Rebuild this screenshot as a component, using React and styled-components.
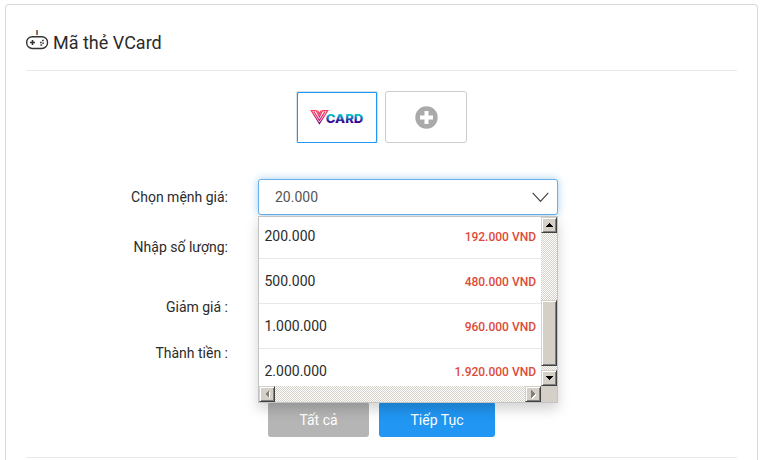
import React from "react";

import styled, { createGlobalStyle, css } from "styled-components";
import { useState } from "react";

const prices = [
  { value: "200.000", price: "192.000 VND" },
  { value: "500.000", price: "480.000 VND" },
  { value: "1.000.000", price: "960.000 VND" },
  { value: "2.000.000", price: "1.920.000 VND" },
];

const App = () => {
  const [selected, setSelected] = useState("20.000");

  return (
    <>
      <GlobalStyle />
      <Panel>
        <Header>
          <GamepadIcon />
          <Title>Mã thẻ VCard</Title>
        </Header>
        <Cards>
          <Card $active>
            <VCardLogo />
          </Card>
          <Card>
            <PlusIcon />
          </Card>
        </Cards>
        <Row>
          <Label>Chọn mệnh giá:</Label>
          <SelectWrapper>
            <Select type="button">
              {selected}
              <Chevron />
            </Select>
            <Dropdown>
              <Options>
                {prices.map((item) => (
                  <Option key={item.value} onClick={() => setSelected(item.value)}>
                    <span>{item.value}</span>
                    <Price>{item.price}</Price>
                  </Option>
                ))}
              </Options>
              <VerticalBar>
                <ScrollButton><Arrow points="4,0 8,4 0,4" /></ScrollButton>
                <Thumb />
                <ScrollButton><Arrow points="0,0 8,0 4,4" /></ScrollButton>
              </VerticalBar>
              <HorizontalBar>
                <ScrollButton><Arrow side disabled points="4,0 4,8 0,4" /></ScrollButton>
                <ScrollButton><Arrow side disabled points="0,0 4,4 0,8" /></ScrollButton>
              </HorizontalBar>
              <Corner />
            </Dropdown>
          </SelectWrapper>
        </Row>
        <Row $top={14}>
          <Label>Nhập số lượng:</Label>
        </Row>
        <Row $top={24}>
          <Label>Giảm giá :</Label>
        </Row>
        <Row $top={10}>
          <Label>Thành tiền :</Label>
        </Row>
        <Actions>
          <Button $width={101}>Tất cả</Button>
          <Button $width={116} $primary>Tiếp Tục</Button>
        </Actions>
      </Panel>
    </>
  );
};

const GamepadIcon = () => (
  <svg width="23" height="20" viewBox="0 0 23 20" fill="none">
    <path d="M11 0v5" stroke="#8a5638" strokeWidth="1.7" />
    <rect x="0.7" y="6.7" width="20.8" height="11.8" rx="5.6" stroke="#333" strokeWidth="1.4" />
    <path d="M4 12.5h5M6.5 10v5" stroke="#333" strokeWidth="1.6" />
    <path d="M14 12.4h1.8M16 10.4h1.8M16.3 13.2h1.6M14.4 15.1h1.8" stroke="#444" strokeWidth="1.5" />
  </svg>
);

const VCardLogo = () => (
  <svg width="54" height="16" viewBox="0 0 54 16">
    <defs>
      <linearGradient id="pink" x1="0" y1="1" x2="0" y2="15" gradientUnits="userSpaceOnUse">
        <stop offset="0" stopColor="#ff3d58" />
        <stop offset="0.5" stopColor="#dc2c72" />
        <stop offset="1" stopColor="#7b1483" />
      </linearGradient>
      <linearGradient id="blue" x1="0" y1="4.5" x2="0" y2="14" gradientUnits="userSpaceOnUse">
        <stop offset="0.1" stopColor="#08c7cf" />
        <stop offset="0.5" stopColor="#1766bd" />
        <stop offset="0.9" stopColor="#35008e" />
      </linearGradient>
    </defs>
    <path
      d="M1.2 1.6h4.9L9.4 8 12.6 1.6h5.2L9.4 14.6zM3.8 2.6l5.6 8.8 5.6-8.8M7.6 1.6l1.8 3.5 1.8-3.5"
      fill="none"
      stroke="url(#pink)"
      strokeWidth="1.15"
    />
    <LogoText x="15.8" y="13.6" textLength="37.4" lengthAdjust="spacingAndGlyphs" fill="url(#blue)">
      CARD
    </LogoText>
  </svg>
);

const PlusIcon = () => (
  <svg width="23" height="23" viewBox="0 0 23 23">
    <circle cx="11.5" cy="11.5" r="11.2" fill="#aaa" />
    <path d="M11.5 5v13M5 11.5h13" stroke="#fff" strokeWidth="4" />
  </svg>
);

const Chevron = () => (
  <svg width="17" height="11" viewBox="0 0 17 11" fill="none">
    <path d="M0.7 0.8 8.5 9.3 16.3 0.8" stroke="#444" strokeWidth="1.2" />
  </svg>
);

const Arrow = ({ points, side, disabled }) => (
  <ArrowSvg
    width={side ? 4 : 8}
    height={side ? 8 : 4}
    viewBox={side ? "0 0 4 8" : "0 0 8 4"}
    shapeRendering="crispEdges"
    $disabled={disabled}
  >
    <polygon points={points} />
  </ArrowSvg>
);

const ArrowSvg = styled.svg`
  fill: ${(props) => (props.$disabled ? "#808080" : "#000")};
  filter: ${(props) => (props.$disabled ? "drop-shadow(1px 1px 0 #fff)" : "none")};
`;

const GlobalStyle = createGlobalStyle`
  * {
    box-sizing: border-box;
  }

  body {
    background: #fff;
    color: #2b2b2b;
    font-family: Roboto, "Liberation Sans", sans-serif;
    font-size: 14px;
    margin: 0;
  }
`;

const Panel = styled.div`
  border: 1px solid #d9d9d9;
  border-bottom: none;
  border-radius: 4px 4px 0 0;
  height: 456px;
  margin: 4px 5px 0;
  padding: 0 20px;
`;

const Header = styled.div`
  align-items: flex-start;
  border-bottom: 1px solid #e8e8e8;
  display: flex;
  gap: 4px;
  height: 66px;
  padding-top: 25px;
`;

const Title = styled.h1`
  font-size: 18px;
  font-weight: 400;
  line-height: 26px;
  margin: 0;
`;

const Cards = styled.div`
  display: flex;
  gap: 7px;
  justify-content: center;
  margin: 20px 0 36px;
`;

const Card = styled.div`
  align-items: center;
  border: 1px solid #ccc;
  border-radius: 3px;
  display: flex;
  height: 52px;
  justify-content: center;
  width: 82px;

  ${(props) =>
    props.$active &&
    css`
      border-color: #d5e3ef #d5e3ef #2196f3;
      border-radius: 2px;
      box-shadow: inset 1px 1px #2196f3, inset -1px 0 #2196f3;
    `}
`;

const LogoText = styled.text`
  font-family: Inter, sans-serif;
  font-size: 11.8px;
  font-weight: 800;
`;

const Row = styled.div`
  align-items: center;
  display: flex;
  gap: 30px;
  height: 36px;
  margin-top: ${(props) => props.$top || 0}px;
`;

const Label = styled.label`
  text-align: right;
  width: 202px;
`;

const SelectWrapper = styled.div`
  height: 36px;
  position: relative;
  width: 300px;
`;

const Select = styled.button`
  align-items: center;
  background: #fff;
  border: 1px solid #66afe9;
  border-radius: 3px;
  box-shadow: 0 0 8px rgba(102, 175, 233, 0.6);
  color: #555;
  display: flex;
  font-family: inherit;
  font-size: 14px;
  height: 36px;
  justify-content: space-between;
  padding: 0 8px 0 16px;
  width: 100%;
`;

const Dropdown = styled.div`
  background: #fff;
  border: 1px solid #c4c4c4;
  box-shadow: 0 6px 12px rgba(0, 0, 0, 0.18);
  display: grid;
  grid-template-columns: 282px 16px;
  grid-template-rows: 169px 16px;
  left: 0;
  position: absolute;
  top: 37px;
  width: 300px;
  z-index: 2;
`;

const Options = styled.ul`
  display: flex;
  flex-direction: column;
  list-style: none;
  margin: 0;
  overflow: hidden;
  padding: 0;
`;

const Option = styled.li`
  align-items: center;
  border-bottom: 1px solid #e8e8e8;
  display: flex;
  flex: 0 0 45px;
  justify-content: space-between;
  padding: 0 5px 0 5.5px;

  /* the list is scrolled a few pixels past the first row */
  &:first-child {
    margin-top: -3px;
  }
`;

const Price = styled.span`
  color: #dd4b39;
  font-size: 12px;
  font-weight: 500;
  padding-top: 2px;
`;

const track = css`
  background: repeating-conic-gradient(#d4d0c8 0 25%, #fff 0 50%) 0 0 / 2px 2px;
  display: flex;
`;

const VerticalBar = styled.div`
  ${track}
  flex-direction: column;
`;

const HorizontalBar = styled.div`
  ${track}
  justify-content: space-between;
`;

const raised = css`
  background: #d4d0c8;
  border: 1px solid;
  border-color: #d4d0c8 #404040 #404040 #d4d0c8;
  box-shadow: inset 1px 1px #fff, inset -1px -1px #808080;
`;

const ScrollButton = styled.div`
  ${raised}
  align-items: center;
  display: flex;
  flex: none;
  height: 16px;
  justify-content: center;
  width: 16px;
`;

const Thumb = styled.div`
  ${raised}
  height: 66px;
  margin: auto 0 4px;
`;

const Corner = styled.div`
  background: #d4d0c8;
`;

const Actions = styled.div`
  border-bottom: 1px solid #e8e8e8;
  display: flex;
  gap: 10px;
  height: 87px;
  justify-content: center;
  padding-top: 31px;
`;

const Button = styled.button`
  background: ${(props) => (props.$primary ? "#2196f3" : "#b5b5b5")};
  border: none;
  border-radius: 3px;
  color: #fff;
  font-family: inherit;
  font-size: 14px;
  height: 35px;
  padding: 0;
  width: ${(props) => props.$width}px;
`;

export default App;
